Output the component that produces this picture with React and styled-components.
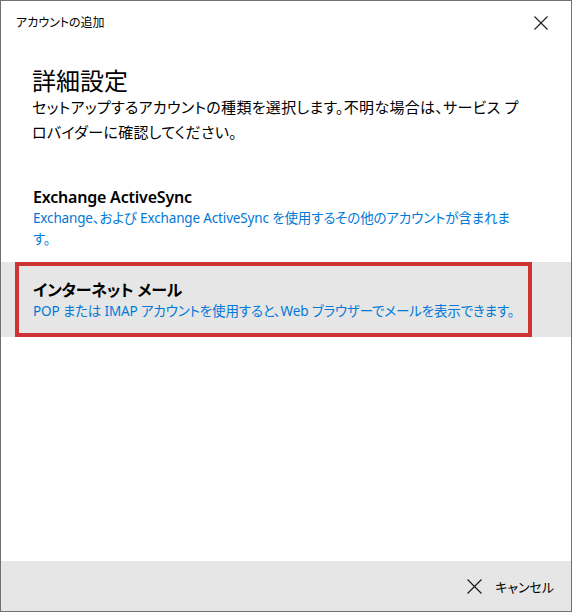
import React from 'react'
import styled, { createGlobalStyle } from 'styled-components'

const GlobalStyle = createGlobalStyle`
  html, body {
    margin: 0;
    padding: 0;
    background: #ffffff;
    overflow: hidden;
  }
  * {
    box-sizing: border-box;
  }
`

const font = `"Noto Sans", "Noto Sans CJK JP", sans-serif`

const Window = styled.div`
  width: 572px;
  height: 612px;
  border: 1px solid #707070;
  background: #ffffff;
  display: flex;
  flex-direction: column;
  font-family: ${font};
  font-feature-settings: "palt";
  color: #000000;
`

const TitleBar = styled.div`
  height: 43px;
  display: flex;
  align-items: center;
  justify-content: space-between;
  padding: 0 16px 0 15px;
`

const TitleText = styled.div`
  font-size: 12px;
  line-height: 16px;
`

const CloseButton = styled.button`
  width: 28px;
  height: 28px;
  border: none;
  background: transparent;
  padding: 0;
  display: flex;
  align-items: center;
  justify-content: center;
  cursor: pointer;
`

const Body = styled.div`
  flex: 1;
  display: flex;
  flex-direction: column;
`

const Header = styled.div`
  padding: 23px 42px 0 31px;
`

const Heading = styled.h1`
  margin: 0;
  font-size: 24px;
  font-weight: 400;
  line-height: 28px;
`

const Description = styled.p`
  margin: 0;
  font-size: 15px;
  line-height: 25px;
  letter-spacing: 0.3px;
`

const List = styled.div`
  margin-top: 38px;
  display: flex;
  flex-direction: column;
`

const Item = styled.div`
  padding: ${p => (p.$selected ? '0' : '0 0 0 32px')};
  background: ${p => (p.$selected ? '#e6e6e6' : 'transparent')};
  cursor: pointer;
`

const FocusBox = styled.div`
  margin-left: 14px;
  width: 517px;
  border: 4px solid #cd3436;
  padding: 13px 0 11px 14px;
`

const ItemInner = styled.div`
  padding: 3px 0 12px 0;
`

const ItemTitle = styled.div`
  font-size: 16px;
  font-weight: 600;
  line-height: 22px;
  letter-spacing: -0.2px;
`

const ItemDesc = styled.div`
  max-width: 486px;
  font-size: 13.5px;
  line-height: 21px;
  color: #0078d7;
  letter-spacing: -0.15px;
`

const Footer = styled.div`
  height: 50px;
  background: #e6e6e6;
  display: flex;
  align-items: center;
  justify-content: flex-end;
  padding-right: 17px;
`

const CancelButton = styled.button`
  border: none;
  background: transparent;
  display: flex;
  align-items: center;
  gap: 13px;
  font-family: ${font};
  font-feature-settings: "palt";
  font-size: 13px;
  color: #000000;
  padding: 0;
  cursor: pointer;
`

const CrossIcon = ({ size = 14 }) => (
  <svg width={size} height={size} viewBox="0 0 14 14">
    <path d="M0.5 0.5 L13.5 13.5 M13.5 0.5 L0.5 13.5" stroke="#1a1a1a" strokeWidth="1.1" fill="none" />
  </svg>
)

const accounts = [
  {
    title: 'Exchange ActiveSync',
    desc: 'Exchange、および Exchange ActiveSync を使用するその他のアカウントが含まれます。',
  },
  {
    title: 'インターネット メール',
    desc: 'POP または IMAP アカウントを使用すると、Web ブラウザーでメールを表示できます。',
    selected: true,
  },
]

export default function App() {
  return (
    <>
      <GlobalStyle />
      <Window>
        <TitleBar>
          <TitleText>アカウントの追加</TitleText>
          <CloseButton aria-label="閉じる">
            <CrossIcon />
          </CloseButton>
        </TitleBar>
        <Body>
          <Header>
            <Heading>詳細設定</Heading>
            <Description>
              セットアップするアカウントの種類を選択します。不明な場合は、サービス プロバイダーに確認してください。
            </Description>
          </Header>
          <List>
            {accounts.map(a =>
              a.selected ? (
                <Item key={a.title} $selected>
                  <FocusBox>
                    <ItemTitle>{a.title}</ItemTitle>
                    <ItemDesc>{a.desc}</ItemDesc>
                  </FocusBox>
                </Item>
              ) : (
                <Item key={a.title}>
                  <ItemInner>
                    <ItemTitle>{a.title}</ItemTitle>
                    <ItemDesc>{a.desc}</ItemDesc>
                  </ItemInner>
                </Item>
              )
            )}
          </List>
        </Body>
        <Footer>
          <CancelButton>
            <CrossIcon size={15} />
            キャンセル
          </CancelButton>
        </Footer>
      </Window>
    </>
  )
}
